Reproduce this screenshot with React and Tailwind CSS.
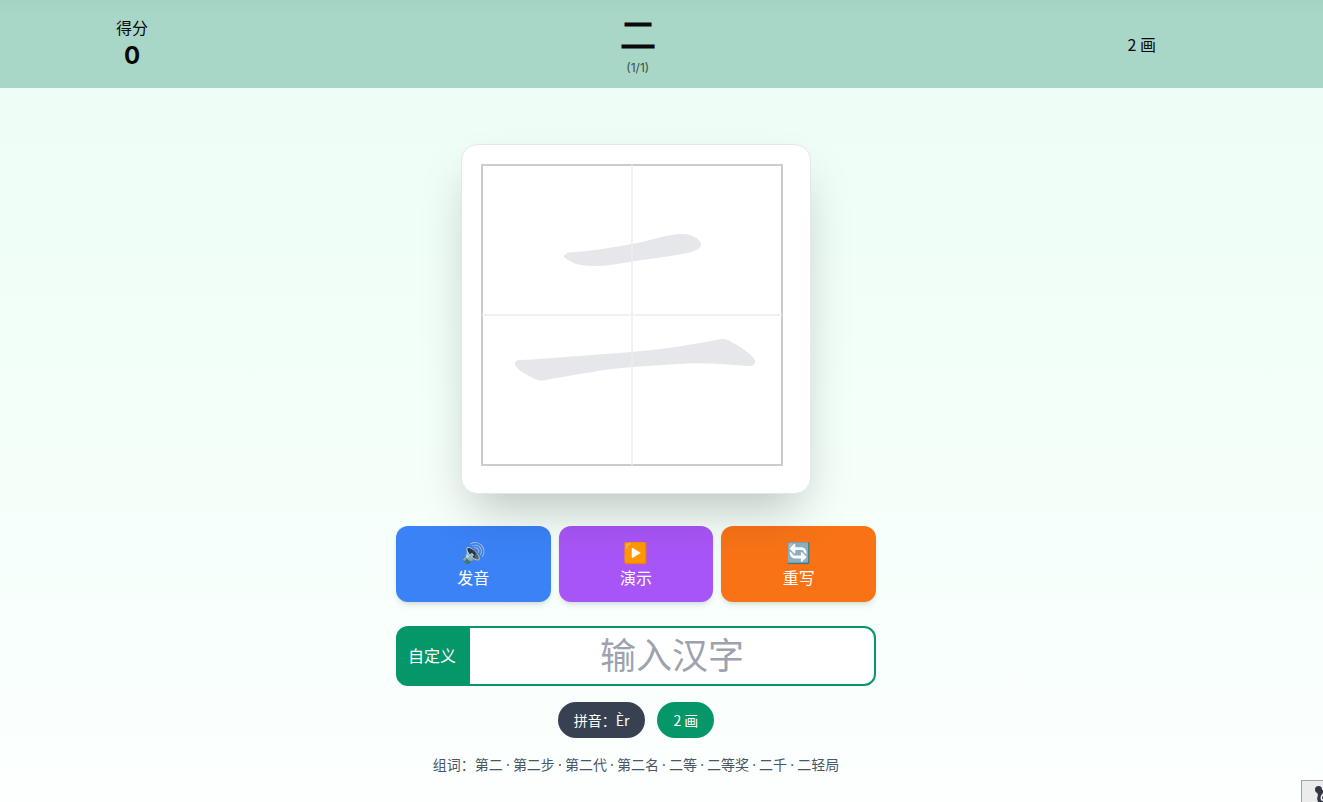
import React, { useState } from 'react';

const words = ['第二', '第二步', '第二代', '第二名', '二等', '二等奖', '二千', '二轻局'];

const actions = [
  { icon: '🔊', label: '发音', className: 'bg-[#3b82f6]' },
  { icon: '▶️', label: '演示', className: 'bg-[#a855f7]' },
  { icon: '🔄', label: '重写', className: 'bg-[#f97316]' }
];

function Header({ score, char, strokes }) {
  return (
    <header className="bg-linear-to-b from-[#a5d3c3] to-[#a8d7c8] to-20% pr-[51px] text-[#0a0a0a]">
      <div className="mx-auto flex h-[88px] max-w-[1040px] items-center justify-between">
        <div className="text-center">
          <div className="text-base">得分</div>
          <div className="text-2xl font-bold">{score}</div>
        </div>
        <div className="text-center">
          <h1 className="font-['Inter',sans-serif] text-4xl leading-[48px] font-bold">{char}</h1>
          <div className="text-xs opacity-70">(1/1)</div>
        </div>
        <div className="font-['Noto_Sans_CJK_SC',sans-serif] text-base">{strokes} 画</div>
      </div>
    </header>
  );
}

function WritingBoard() {
  return (
    <div className="relative z-10 rounded-2xl border border-[#e5e7eb] bg-white p-5 shadow-2xl">
      <svg width="308" height="308" viewBox="0 0 308 308" className="overflow-visible">
        <rect x="0" y="0" width="300" height="300" fill="none" stroke="#cccccc" strokeWidth="2" />
        <path
          d="M82 92 C82 89 86 87 93 87 C112 86 132 82 150 79 C168 76 184 69 201 69 C210 69 219 75 219 79 C219 86 206 88 195 90 L150 96.500 C136 99 124 101 113 101 C98 101 91 99 82 92 Z"
          fill="#e5e7eb"
        />
        <path
          d="M33 199 C33 196 35 195 38 195 L50 194.500 L150 187 C184 184 208 180 237 174.500 C242 173.500 245 174 249 177 C260 182 273 192 273 196 C273 200 271 201 267 201 C246 200 222 197 196 199 L150 202 C122 204 100 209 68 214 C62 216 58 216 53 214 C42 209 33 203 33 199 Z"
          fill="#e5e7eb"
        />
        <path d="M150 0 V300 M0 150 H300" fill="none" stroke="#eeeeee" strokeWidth="2" strokeOpacity="0.8" />
      </svg>
    </div>
  );
}

export default function App() {
  const [text, setText] = useState('');

  return (
    <div lang="zh-CN" className="min-h-screen bg-linear-to-b from-[#ecfdf5] via-[#f3fff9] to-[#fcfffe] font-['Inter','Noto_Sans_CJK_SC',sans-serif]">
      <Header score={0} char="二" strokes={2} />

      <main className="flex flex-col items-center pt-14 pr-[51px] pb-7">
        <WritingBoard />

        <div className="mt-8 grid w-full max-w-[480px] grid-cols-3 gap-2">
          {actions.map((a) => (
            <button
              key={a.label}
              type="button"
              className={`flex flex-col items-center rounded-xl py-3 text-white shadow-md ${a.className}`}
            >
              <span className="font-['Noto_Sans_CJK_SC',sans-serif] text-xl leading-7">{a.icon}</span>
              <span className="text-base">{a.label}</span>
            </button>
          ))}
        </div>

        <div className="mt-6 flex h-[60px] w-full max-w-[480px] rounded-xl border-2 border-[#059669] bg-[#059669]">
          <label htmlFor="custom" className="flex shrink-0 items-center pr-3.5 pl-2.5 text-base text-white">
            自定义
          </label>
          <input
            id="custom"
            value={text}
            onChange={(e) => setText(e.target.value)}
            placeholder="输入汉字"
            className="min-w-0 flex-1 rounded-r-[10px] bg-white text-center text-4xl text-gray-800 outline-none placeholder:text-[#9ca3af]"
          />
        </div>

        <div className="mt-4 flex gap-3 font-['Noto_Sans_CJK_SC',sans-serif] text-sm text-white">
          <span className="rounded-full bg-[#374151] px-4 py-2">拼音：Èr</span>
          <span className="rounded-full bg-[#059669] px-4 py-2">2 画</span>
        </div>

        <p className="mt-4 font-['Noto_Sans_CJK_SC',sans-serif] text-sm text-[#4b5563]">
          组词：
          {words.map((word, i) => (
            <React.Fragment key={word}>
              {i > 0 && (
                <>
                  {' '}
                  <span className="font-['Noto_Sans',sans-serif]">·</span>{' '}
                </>
              )}
              {word}
            </React.Fragment>
          ))}
        </p>
      </main>

      <button
        type="button"
        aria-label="QR"
        className="fixed right-0 bottom-0 size-[22px] overflow-hidden border-t border-l border-[#a3a3a3] bg-[#ececec]"
      >
        <svg width="22" height="22" viewBox="0 0 22 22">
          <circle cx="16.500" cy="8.500" r="3.500" fill="#333740" />
          <path d="M14 9 H22 V22 H17 Q14 19 16 14 Z" fill="#333740" />
          <path d="M22 12 Q18 16 20 19 H22" fill="none" stroke="#fff" strokeWidth="1.500" />
        </svg>
      </button>
    </div>
  );
}
